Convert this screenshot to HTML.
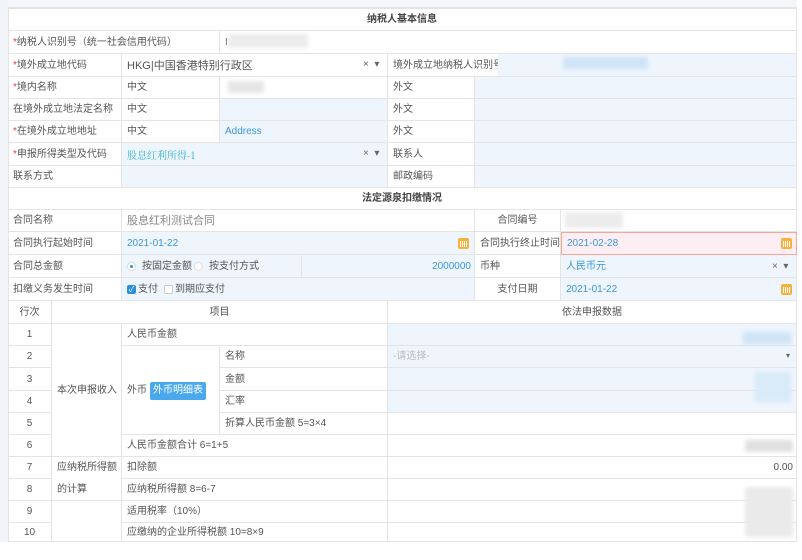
<!DOCTYPE html>
<html><head><meta charset="utf-8">
<style>
*{margin:0;padding:0;box-sizing:border-box}
body{width:802px;height:560px;overflow:hidden;background:#fff;font-family:"Liberation Sans","Noto Sans CJK SC",sans-serif;font-size:10px;color:#555;position:relative}
.c{position:absolute;border-right:1px solid #e4e4e4;border-bottom:1px solid #e4e4e4;padding-left:5px;white-space:nowrap;overflow:hidden;display:flex;align-items:center;line-height:12px;padding-top:1px}
.b{background:#eef5fd}
.ctr{justify-content:center;padding-left:0}
.r{color:#e4393c}
.bl{color:#3b96de}
.t{color:#35b5c8}
.g{color:#888}
.x{position:absolute;font-size:10px;color:#666}
.cal{position:absolute;width:11px;height:11px;background:#f7b23b;border-radius:2px}
.cal:after{content:"";position:absolute;left:2px;top:3px;width:7px;height:6px;background:repeating-linear-gradient(90deg,#fff 0 1px,#f7b23b 1px 2px)}
.blur{position:absolute;filter:blur(2px)}
</style></head><body>
<div style="position:absolute;left:0;top:0;width:8px;height:560px;background:#f1f4f8"></div>
<div style="position:absolute;left:8px;top:0;width:789px;height:8px;background:#f3f7fb;border-bottom:1px solid #e4e4e4"></div>
<div style="position:absolute;left:8px;top:8px;width:789px;height:534px;border-left:1px solid #e4e4e4;border-top:1px solid #e4e4e4"></div>

<div class="c ctr" style="left:8px;top:9px;width:789px;height:22px;font-weight:bold;color:#444">纳税人基本信息</div>

<div class="c" style="left:8px;top:31px;width:212px;height:23px"><span class="r">*</span>纳税人识别号（统一社会信用代码）</div>
<div class="c" style="left:220px;top:31px;width:577px;height:23px">I</div>
<div class="blur" style="left:228px;top:34px;width:80px;height:14px;background:#ececec"></div>

<div class="c" style="left:8px;top:54px;width:114px;height:23px"><span class="r">*</span>境外成立地代码</div>
<div class="c" style="left:122px;top:54px;width:266px;height:23px;font-size:11px">HKG|中国香港特别行政区</div>
<div class="x" style="left:363px;top:59px">×&nbsp; ▾</div>
<div class="c b" style="left:475px;top:54px;width:322px;height:23px"></div>
<div class="c" style="left:388px;top:54px;width:110px;height:23px;border-right:none;background:#fff">境外成立地纳税人识别号</div>
<div class="blur" style="left:563px;top:57px;width:85px;height:12px;background:#cfe4f6"></div>

<div class="c" style="left:8px;top:77px;width:114px;height:22px"><span class="r">*</span>境内名称</div>
<div class="c" style="left:122px;top:77px;width:98px;height:22px">中文</div>
<div class="c" style="left:220px;top:77px;width:168px;height:22px"></div>
<div class="blur" style="left:228px;top:81px;width:36px;height:12px;background:#e6e6e6"></div>
<div class="c" style="left:388px;top:77px;width:87px;height:22px">外文</div>
<div class="c b" style="left:475px;top:77px;width:322px;height:22px"></div>

<div class="c" style="left:8px;top:99px;width:114px;height:22px">在境外成立地法定名称</div>
<div class="c" style="left:122px;top:99px;width:98px;height:22px">中文</div>
<div class="c b" style="left:220px;top:99px;width:168px;height:22px"></div>
<div class="c" style="left:388px;top:99px;width:87px;height:22px">外文</div>
<div class="c b" style="left:475px;top:99px;width:322px;height:22px"></div>

<div class="c" style="left:8px;top:121px;width:114px;height:22px"><span class="r">*</span>在境外成立地地址</div>
<div class="c" style="left:122px;top:121px;width:98px;height:22px">中文</div>
<div class="c b bl" style="left:220px;top:121px;width:168px;height:22px">Address</div>
<div class="c" style="left:388px;top:121px;width:87px;height:22px">外文</div>
<div class="c b" style="left:475px;top:121px;width:322px;height:22px"></div>

<div class="c" style="left:8px;top:143px;width:114px;height:23px"><span class="r">*</span>申报所得类型及代码</div>
<div class="c b t" style="left:122px;top:143px;width:266px;height:23px;font-family:'Noto Serif CJK SC',serif">股息红利所得-1</div>
<div class="x" style="left:363px;top:148px">×&nbsp; ▾</div>
<div class="c" style="left:388px;top:143px;width:87px;height:23px">联系人</div>
<div class="c b" style="left:475px;top:143px;width:322px;height:23px"></div>

<div class="c" style="left:8px;top:166px;width:114px;height:22px">联系方式</div>
<div class="c b" style="left:122px;top:166px;width:266px;height:22px"></div>
<div class="c" style="left:388px;top:166px;width:87px;height:22px">邮政编码</div>
<div class="c b" style="left:475px;top:166px;width:322px;height:22px"></div>

<div class="c ctr" style="left:8px;top:188px;width:789px;height:22px;font-weight:bold;color:#444">法定源泉扣缴情况</div>

<div class="c" style="left:8px;top:210px;width:114px;height:22px">合同名称</div>
<div class="c g" style="left:122px;top:210px;width:353px;height:22px;font-size:11px">股息红利测试合同</div>
<div class="c ctr" style="left:475px;top:210px;width:86px;height:22px">合同编号</div>
<div class="c" style="left:561px;top:210px;width:236px;height:22px"></div>
<div class="blur" style="left:565px;top:212px;width:58px;height:16px;background:#ececec"></div>

<div class="c" style="left:8px;top:232px;width:114px;height:23px">合同执行起始时间</div>
<div class="c b bl" style="left:122px;top:232px;width:353px;height:23px">2021-01-22</div>
<div class="cal" style="left:458px;top:238px"></div>
<div class="c" style="left:475px;top:232px;width:86px;height:23px">合同执行终止时间</div>
<div class="c bl" style="left:561px;top:232px;width:236px;height:23px;background:#fdeef3;border:1px solid #f0a89a">2021-02-28</div>
<div class="cal" style="left:781px;top:238px"></div>

<div class="c" style="left:8px;top:255px;width:114px;height:23px">合同总金额</div>
<div class="c b" style="left:122px;top:255px;width:180px;height:23px">
<span style="display:inline-block;width:9px;height:9px;border-radius:50%;border:1px solid #ddd;background:#fff;position:relative;margin-right:6px"><span style="position:absolute;left:2px;top:2px;width:3px;height:3px;border-radius:50%;background:#2b8fe0"></span></span>按固定金额
<span style="display:inline-block;width:9px;height:9px;border-radius:50%;border:1px solid #ddd;background:#fff;margin:0 6px 0 2px"></span>按支付方式</div>
<div class="c b bl" style="left:302px;top:255px;width:173px;height:23px;justify-content:flex-end;padding-right:3px">2000000</div>
<div class="c" style="left:475px;top:255px;width:86px;height:23px">币种</div>
<div class="c b bl" style="left:561px;top:255px;width:236px;height:23px">人民币元</div>
<div class="x" style="left:772px;top:261px">×&nbsp; ▾</div>

<div class="c" style="left:8px;top:278px;width:114px;height:23px">扣缴义务发生时间</div>
<div class="c b" style="left:122px;top:278px;width:353px;height:23px">
<span style="display:inline-block;width:9px;height:9px;border-radius:2px;background:#2b8fe0;color:#fff;font-size:8px;line-height:9px;text-align:center;margin-right:2px">✓</span>支付
<span style="display:inline-block;width:9px;height:9px;border-radius:2px;border:1px solid #ccc;background:#fff;margin:0 2px 0 6px"></span>到期应支付</div>
<div class="c ctr" style="left:475px;top:278px;width:86px;height:23px">支付日期</div>
<div class="c b bl" style="left:561px;top:278px;width:236px;height:23px">2021-01-22</div>
<div class="cal" style="left:781px;top:284px"></div>

<div class="c ctr" style="left:8px;top:301px;width:44px;height:23px">行次</div>
<div class="c ctr" style="left:52px;top:301px;width:336px;height:23px">项目</div>
<div class="c ctr" style="left:388px;top:301px;width:409px;height:23px">依法申报数据</div>

<div class="c ctr" style="left:8px;top:324px;width:44px;height:22px">1</div>
<div class="c ctr" style="left:8px;top:346px;width:44px;height:22px">2</div>
<div class="c ctr" style="left:8px;top:368px;width:44px;height:23px">3</div>
<div class="c ctr" style="left:8px;top:391px;width:44px;height:22px">4</div>
<div class="c ctr" style="left:8px;top:413px;width:44px;height:22px">5</div>
<div class="c ctr" style="left:8px;top:435px;width:44px;height:22px">6</div>
<div class="c ctr" style="left:8px;top:457px;width:44px;height:22px">7</div>
<div class="c ctr" style="left:8px;top:479px;width:44px;height:22px">8</div>
<div class="c ctr" style="left:8px;top:501px;width:44px;height:22px">9</div>
<div class="c ctr" style="left:8px;top:523px;width:44px;height:19px">10</div>

<div class="c" style="left:52px;top:324px;width:70px;height:133px">本次申报收入</div>
<div class="c" style="left:52px;top:457px;width:70px;height:44px;line-height:22px;white-space:normal;display:block;padding-top:0">应纳税所得额<br>的计算</div>
<div class="c" style="left:52px;top:501px;width:70px;height:41px"></div>

<div class="c" style="left:122px;top:324px;width:266px;height:22px">人民币金额</div>
<div class="c" style="left:122px;top:346px;width:98px;height:89px">外币<span style="background:#4aa8ec;color:#fff;padding:3px 3px;margin-left:3px;border-radius:2px">外币明细表</span></div>
<div class="c" style="left:220px;top:346px;width:168px;height:22px">名称</div>
<div class="c" style="left:220px;top:368px;width:168px;height:23px">金额</div>
<div class="c" style="left:220px;top:391px;width:168px;height:22px">汇率</div>
<div class="c" style="left:220px;top:413px;width:168px;height:22px">折算人民币金额 5=3×4</div>
<div class="c" style="left:122px;top:435px;width:266px;height:22px">人民币金额合计 6=1+5</div>
<div class="c" style="left:122px;top:457px;width:266px;height:22px">扣除额</div>
<div class="c" style="left:122px;top:479px;width:266px;height:22px">应纳税所得额 8=6-7</div>
<div class="c" style="left:122px;top:501px;width:266px;height:22px">适用税率（10%）</div>
<div class="c" style="left:122px;top:523px;width:266px;height:19px">应缴纳的企业所得税额 10=8×9</div>

<div class="c b" style="left:388px;top:324px;width:409px;height:22px"></div>
<div class="c b g" style="left:388px;top:346px;width:409px;height:22px;color:#bbb">-请选择-</div>
<div class="x" style="left:786px;top:351px;font-size:8px">▾</div>
<div class="c b" style="left:388px;top:368px;width:409px;height:23px"></div>
<div class="c b" style="left:388px;top:391px;width:409px;height:22px"></div>
<div class="c" style="left:388px;top:413px;width:409px;height:22px"></div>
<div class="c" style="left:388px;top:435px;width:409px;height:22px"></div>
<div class="c" style="left:388px;top:457px;width:409px;height:22px;justify-content:flex-end;padding-right:3px">0.00</div>
<div class="c" style="left:388px;top:479px;width:409px;height:22px"></div>
<div class="c" style="left:388px;top:501px;width:409px;height:22px"></div>
<div class="c" style="left:388px;top:523px;width:409px;height:19px"></div>

<div class="blur" style="left:743px;top:332px;width:48px;height:12px;background:#cfe4f6"></div>
<div class="blur" style="left:755px;top:372px;width:36px;height:30px;background:#d9eaf8"></div>
<div class="blur" style="left:745px;top:440px;width:48px;height:12px;background:#e0e0e0"></div>
<div class="blur" style="left:745px;top:487px;width:48px;height:50px;background:#eaeaea"></div>
<div style="position:absolute;left:0;top:542px;width:802px;height:18px;background:#fff"></div>
</body></html>
